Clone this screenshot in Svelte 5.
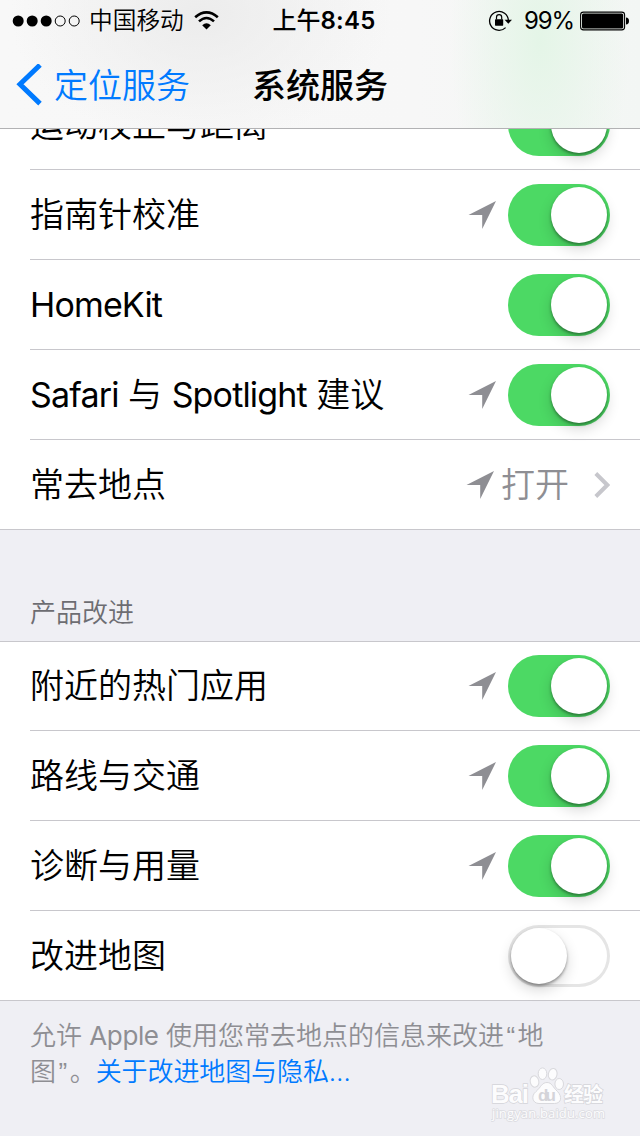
<script lang="ts">
  type Row = {
    label: string;
    arrow?: boolean;
    on?: boolean;
    value?: string;
  };

  const services: Row[] = [
    { label: '运动校正与距离', on: true },
    { label: '指南针校准', arrow: true, on: true },
    { label: 'HomeKit', on: true },
    { label: 'Safari 与 Spotlight 建议', arrow: true, on: true },
    { label: '常去地点', arrow: true, value: '打开' }
  ];

  const improvements: Row[] = [
    { label: '附近的热门应用', arrow: true, on: true },
    { label: '路线与交通', arrow: true, on: true },
    { label: '诊断与用量', arrow: true, on: true },
    { label: '改进地图', on: false }
  ];

  let groups = $state([services, improvements]);

  // Split a label so that every odd part is a latin word
  function parts(label: string): string[] {
    return label.split(/([A-Za-z]+)/);
  }
</script>

{#snippet list(rows: Row[])}
  <ul class="list">
    {#each rows as row (row.label)}
      <li class="row">
        <span class="label">{#each parts(row.label) as part, i (i)}<span class:latin={i % 2 === 1}>{part}</span>{/each}</span>
        {#if row.arrow}
          <svg class="arrow" width="28" height="28" viewBox="0 0 28 28">
            <path d="M0.5 14 L28 0 L14.2 28 V14 Z" fill="#8e8e93" />
          </svg>
        {/if}
        {#if row.value}
          <span class="value">{row.value}</span>
          <svg width="16" height="26" viewBox="0 0 16 26">
            <path d="M1.8 1.5 L13.3 13 L1.8 24.5" fill="none" stroke="#c7c7cc" stroke-width="4" />
          </svg>
        {:else}
          <button
            class="switch"
            class:on={row.on}
            role="switch"
            aria-checked={row.on}
            aria-label={row.label}
            onclick={() => (row.on = !row.on)}
          >
            <span class="knob"></span>
          </button>
        {/if}
      </li>
    {/each}
  </ul>
{/snippet}

<div class="screen">
  <header>
    <div class="status">
      <div class="carrier">
        <svg width="68" height="12" viewBox="0 0 68 12">
          <circle cx="6.2" cy="6" r="5.5" />
          <circle cx="20.2" cy="6" r="5.5" />
          <circle cx="34.2" cy="6" r="5.5" />
          <circle cx="48.2" cy="6" r="5" fill="none" stroke="#000" />
          <circle cx="62.2" cy="6" r="5" fill="none" stroke="#000" />
        </svg>
        <span class="operator">中国移动</span>
        <svg width="26" height="20" viewBox="0 0 26 20">
          <path d="M1.2 6.2 Q12.5 -3.4 23.8 6.2" fill="none" stroke="#000" stroke-width="2.7" />
          <path d="M5 10.4 Q12.5 3.6 20 10.4" fill="none" stroke="#000" stroke-width="2.6" />
          <path d="M8.2 14.2 Q12.5 10.2 16.8 14.2 L12.5 18.5 Z" />
        </svg>
      </div>
      <span class="time"><span class="noon">上午</span>8:45</span>
      <div class="power">
        <svg width="24" height="22" viewBox="0 0 24 22">
          <path d="M17.6 17.6 A9.4 9.4 0 1 1 20.4 10.6" fill="none" stroke="#000" stroke-width="1.3" />
          <path d="M16.6 9.8 H24 L20.3 13.8 Z" />
          <rect x="7" y="9.3" width="8.2" height="6.4" rx="0.6" />
          <path d="M8.5 9.5 V7.3 A2.6 2.6 0 0 1 13.7 7.3 V9.5" fill="none" stroke="#000" stroke-width="1.2" />
        </svg>
        <span class="percent">99%</span>
        <svg width="50" height="20" viewBox="0 0 50 20">
          <rect x="0.6" y="1.1" width="44" height="17.8" rx="2.8" fill="none" stroke="#000" stroke-width="1.1" />
          <rect x="2" y="2.6" width="41.2" height="14.9" rx="1.5" />
          <path d="M46 6.5 Q49 6.8 49 10 Q49 13.2 46 13.5 Z" />
        </svg>
      </div>
    </div>
    <nav>
      <a class="back" href="#back">
        <svg width="28" height="42" viewBox="0 0 28 42">
          <path d="M24 1 L4 20.3 L24 39.6" fill="none" stroke="#007aff" stroke-width="5" />
        </svg>
        <span>定位服务</span>
      </a>
      <h1>系统服务</h1>
    </nav>
  </header>

  <main>
    {@render list(groups[0])}
    <h2>产品改进</h2>
    {@render list(groups[1])}
    <p class="note">
      允许 <span class="apple">Apple</span> 使用您常去地点的信息来改进<q>“</q>地<br />图<q>”</q>。<a href="#privacy">关于改进地图与隐私…</a>
    </p>
  </main>

  <svg class="watermark" width="120" height="58" viewBox="0 0 120 58">
    <g fill="#fcfcfd" stroke="#d9d9dd">
      <ellipse cx="43.5" cy="14.5" rx="4.3" ry="5.7" transform="rotate(-12 43.5 14.5)" />
      <ellipse cx="51.5" cy="6.7" rx="4.3" ry="5.8" />
      <ellipse cx="61.7" cy="7.2" rx="4.3" ry="5.8" transform="rotate(12 61.7 7.2)" />
      <ellipse cx="68.2" cy="17" rx="4.3" ry="5.5" />
      <path d="M56 15.5 C51 15.5 50 20 45 24.5 C39.5 29 41.5 36.5 48 36.5 H63.5 C70.5 36.5 71.5 29.5 66.5 24.5 C61.5 20 61 15.5 56 15.5 Z" />
    </g>
    <g class="brand">
      <text x="0" y="35.5" textLength="38">Bai</text>
      <text class="cn" x="73" y="34.5" textLength="39">经验</text>
      <text class="du" x="47" y="34" textLength="18">du</text>
      <text class="site" x="1" y="51" textLength="113">jingyan.baidu.com</text>
    </g>
  </svg>
</div>

<style>
  :global(body) {
    margin: 0;
    background: #efeff4;
  }

  .screen {
    position: relative;
    width: 640px;
    height: 1136px;
    overflow: hidden;
    background: #efeff4;
    color: #000;
    font-family: Inter, "Noto Sans CJK SC", sans-serif;
    font-weight: 350;
  }

  header {
    position: relative;
    z-index: 1;
    box-sizing: border-box;
    height: 129px;
    border-bottom: 1px solid #b2b2b4;
    background:
      radial-gradient(ellipse 90px 200px at 540px 40px, #e4f5e7, #f3f6f400),
      radial-gradient(ellipse 190px 130px at 200px 15px, #ececec, #f7f7f700),
      linear-gradient(90deg, #f8f8f8 0, #f7f7f7 65%, #f3f6f4);
  }

  .status,
  nav {
    display: grid;
    grid-template-columns: 1fr auto 1fr;
    align-items: center;
  }

  .status {
    height: 41px;
    padding: 0 11px 0 12px;
    font-size: 24px;
    line-height: 41px;
  }

  .carrier,
  .power,
  .back,
  .row {
    display: flex;
    align-items: center;
  }

  .operator {
    margin: 0 10px 0 9px;
    font-size: 23.7px;
  }

  .time {
    padding-left: 7px;
    font-size: 24px;
    font-weight: 600;
    letter-spacing: 0.2px;
  }

  .noon {
    font-weight: 500;
    letter-spacing: 0;
  }

  .time,
  h1 {
    grid-column: 2;
  }

  .power {
    justify-content: flex-end;
    margin-right: -1px;
  }

  .percent {
    margin: 0 6px 0 12px;
    font-weight: 380;
    letter-spacing: -1.1px;
  }

  nav {
    height: 87px;
    padding: 0 16px;
    font-size: 34px;
  }

  .back {
    gap: 10px;
    color: #007aff;
    text-decoration: none;
  }

  .back span,
  h1 {
    margin: -3px 0 0;
  }

  h1 {
    font-size: 34px;
    font-weight: 500;
  }

  main {
    margin-top: -49px;
  }

  .list {
    margin: 0;
    padding: 0;
    list-style: none;
    background: #fff;
    border-bottom: 1px solid #c8c7cc;
  }

  .row {
    position: relative;
    box-sizing: border-box;
    height: 90px;
    padding: 1px 30px 1px;
    font-size: 34px;
    line-height: 44px;
  }

  .row:last-child {
    height: 89px;
    padding-bottom: 0;
  }

  /* hairline inset to the text edge */
  .row:not(:last-child)::after {
    content: "";
    position: absolute;
    right: 0;
    bottom: 0;
    left: 30px;
    height: 1px;
    background: #c8c7cc;
  }

  h2 + .list {
    box-shadow: inset 0 1px #c8c7cc;
  }

  .label {
    flex: 1;
    white-space: pre;
  }

  .latin {
    font-weight: 380;
    letter-spacing: -0.85px;
  }

  .arrow {
    margin-right: 12px;
  }

  .value {
    margin: 0 25px 0 -5px;
    color: #8e8e93;
  }

  .switch {
    width: 102px;
    height: 62px;
    padding: 3px;
    border: 0;
    border-radius: 31px;
    background: #fff;
    box-shadow: inset 0 0 0 3px #e5e5e5;
  }

  .switch.on {
    background: #4cd964;
    box-shadow: none;
  }

  .knob {
    display: block;
    width: 56px;
    height: 56px;
    border-radius: 50%;
    background: #fff;
    box-shadow: 0 6px 14px rgba(0, 0, 0, 0.16), 0 2px 3px rgba(0, 0, 0, 0.36);
  }

  .on .knob {
    margin-left: 40px;
  }

  h2 {
    box-sizing: border-box;
    height: 111px;
    margin: 0;
    padding: 65px 30px 0;
    color: #6d6d72;
    font-size: 26px;
    font-weight: 350;
    line-height: 36px;
  }

  .note {
    margin: 0;
    padding: 17px 30px 0;
    color: #8e8e93;
    font-size: 26px;
    line-height: 36px;
    white-space: nowrap;
  }

  .note a {
    color: #007aff;
    letter-spacing: -0.1px;
    text-decoration: none;
  }

  .apple {
    font-weight: 400;
    letter-spacing: -0.4px;
  }

  q {
    padding: 0 2.5px;
    font-family: "Liberation Sans", sans-serif;
    line-height: 1;
    quotes: none;
  }

  .watermark {
    position: absolute;
    top: 1067px;
    left: 491px;
  }

  .brand {
    fill: #fcfcfd;
    stroke: #d4d4d9;
    stroke-width: 1.4px;
    paint-order: stroke;
    font-family: "Liberation Sans", "Noto Sans CJK SC", sans-serif;
    font-size: 26px;
    font-weight: 700;
  }

  .brand .cn {
    font-size: 20px;
  }

  .brand .du {
    fill: #d4d4d9;
    stroke: none;
    font-size: 17px;
  }

  .brand .site {
    font-family: "Open Sans", sans-serif;
    font-size: 13px;
    font-weight: 400;
    stroke: #dcdce1;
    stroke-width: 1.6px;
  }
</style>
